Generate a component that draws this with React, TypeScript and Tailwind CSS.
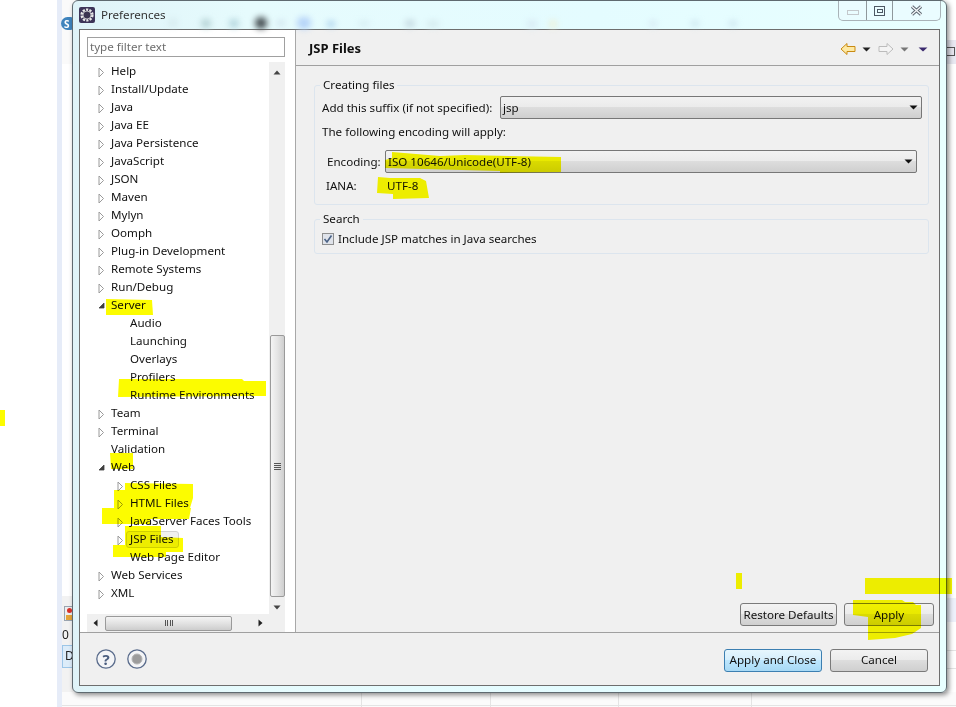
import React from "react";

const font = { fontFamily: '"Noto Sans", sans-serif' };

type Row = { t: string; lvl: 0 | 1; arrow?: "c" | "o" };
const rows: Row[] = [
  { t: "Help", lvl: 0, arrow: "c" },
  { t: "Install/Update", lvl: 0, arrow: "c" },
  { t: "Java", lvl: 0, arrow: "c" },
  { t: "Java EE", lvl: 0, arrow: "c" },
  { t: "Java Persistence", lvl: 0, arrow: "c" },
  { t: "JavaScript", lvl: 0, arrow: "c" },
  { t: "JSON", lvl: 0, arrow: "c" },
  { t: "Maven", lvl: 0, arrow: "c" },
  { t: "Mylyn", lvl: 0, arrow: "c" },
  { t: "Oomph", lvl: 0, arrow: "c" },
  { t: "Plug-in Development", lvl: 0, arrow: "c" },
  { t: "Remote Systems", lvl: 0, arrow: "c" },
  { t: "Run/Debug", lvl: 0, arrow: "c" },
  { t: "Server", lvl: 0, arrow: "o" },
  { t: "Audio", lvl: 1 },
  { t: "Launching", lvl: 1 },
  { t: "Overlays", lvl: 1 },
  { t: "Profilers", lvl: 1 },
  { t: "Runtime Environments", lvl: 1 },
  { t: "Team", lvl: 0, arrow: "c" },
  { t: "Terminal", lvl: 0, arrow: "c" },
  { t: "Validation", lvl: 0 },
  { t: "Web", lvl: 0, arrow: "o" },
  { t: "CSS Files", lvl: 1, arrow: "c" },
  { t: "HTML Files", lvl: 1, arrow: "c" },
  { t: "JavaServer Faces Tools", lvl: 1, arrow: "c" },
  { t: "JSP Files", lvl: 1, arrow: "c" },
  { t: "Web Page Editor", lvl: 1 },
  { t: "Web Services", lvl: 0, arrow: "c" },
  { t: "XML", lvl: 0, arrow: "c" },
];

function Arrow({ kind }: { kind?: "c" | "o" }) {
  if (kind === "c")
    return (
      <svg width="7" height="11" viewBox="0 0 7 11" className="mt-[2px] shrink-0">
        <path d="M1 1 L5.5 5.5 L1 10 Z" fill="#fff" stroke="#9a9a9a" />
      </svg>
    );
  if (kind === "o")
    return (
      <svg width="7" height="9" viewBox="0 0 7 9" className="mt-[1px] shrink-0">
        <path d="M6 2 L6 7 L1 7 Z" fill="#404040" stroke="#404040" strokeWidth="0.8" />
      </svg>
    );
  return <span className="w-[7px] shrink-0" />;
}

function TreeRow({ r }: { r: Row }) {
  const sel = r.t === "JSP Files";
  return (
    <div className={`flex h-[18px] items-center ${r.lvl === 0 ? "pl-[18px]" : "pl-[37px]"}`}>
      <Arrow kind={r.arrow} />
      {sel ? (
        <span className="ml-[2px] flex h-[17px] w-[53px] items-center rounded-[3px] border border-[#d2d2d2] bg-[#f0f0f0] pl-[3px] whitespace-nowrap">
          {r.t}
        </span>
      ) : (
        <span className="ml-[6px] leading-[16px] whitespace-nowrap">{r.t}</span>
      )}
    </div>
  );
}

function Caret({ color = "#111", w = 9 }: { color?: string; w?: number }) {
  return (
    <svg width={w} height="5" viewBox="0 0 9 5" preserveAspectRatio="none">
      <path d="M0.5 0.5 H8.5 L4.5 4.5 Z" fill={color} />
    </svg>
  );
}

function Combo({ text, className }: { text: string; className: string }) {
  return (
    <div
      className={`flex h-[23px] items-center justify-between rounded-[2px] border border-[#777] bg-[linear-gradient(#f2f2f2_0%,#ebebeb_48%,#dddddd_50%,#cfcfcf_100%)] pl-[2px] pr-[3px] ${className}`}
    >
      <span>{text}</span>
      <Caret />
    </div>
  );
}

function Btn({ text, className = "" }: { text: string; className?: string }) {
  return (
    <div
      className={`flex h-[23px] items-center justify-center rounded-[3px] border border-[#7a7a7a] bg-[linear-gradient(#f3f3f3_0%,#ebebeb_48%,#dddddd_50%,#cfcfcf_100%)] ${className}`}
    >
      {text}
    </div>
  );
}

function Group({ title, children, className }: { title: string; children: React.ReactNode; className: string }) {
  return (
    <div className={`relative rounded-[3px] border border-[#dce5ee] ${className}`}>
      <span className="absolute left-[5px] top-[-9px] bg-[#f0f0f0] px-[3px] leading-[16px]">{title}</span>
      {children}
    </div>
  );
}

function Highlights() {
  return (
    <svg width="956" height="707" viewBox="0 0 956 707" className="pointer-events-none absolute left-0 top-0 mix-blend-multiply">
      <g fill="#fcfc00">
        <path d="M0 410H5V426H0Z" />
        <path d="M736 573H742V589H736Z" />
        <path d="M865 578H952V594H865Z" />
        <path d="M853 600H902L905 602H913L916 605H921V628L912 634L895 638L868 640V617L853 615Z" />
        <path d="M392 152L440 156L465 155L561 157V172L500 173L500 171L385 168V160L392 158Z" />
        <path d="M378 177L390 178H420L426 181L429 198L393 199V194L377 193Z" />
        <path d="M106 299L152 300L153 315L106 315Z" />
        <path d="M119 379H242L244 381H266V396L118 397Z" />
        <path d="M110 453H133V469L111 469Z" />
        <path d="M125 483L193 484V498L190 508H114V490H125Z" />
        <path d="M102 508H191L189 519H150V524H102Z" />
        <path d="M125 526H161V537L183 538V552H166V557H113V545L125 545Z" />
      </g>
    </svg>
  );
}

function Backdrop() {
  return (
    <>
      <div className="absolute left-[57px] top-0 h-full w-[5px] bg-[#e6ecf8]" />
      <div className="absolute left-[62px] top-0 h-[64px] w-[12px] bg-[#fafafa]" />
      <div className="absolute left-[61px] top-[17px] flex h-[13px] w-[16px] items-center justify-start rounded-full bg-[#3f84bd] pl-[3px] text-[10px] font-bold leading-none text-white">
        S
      </div>
      <div className="absolute left-[62px] top-[596px] h-[111px] w-[12px] bg-[#f2f2f2]" />
      <div className="absolute left-[64px] top-[606px] flex h-[15px] w-[10px] flex-col items-center justify-between border border-[#9aa4b0] bg-[#eeeeee]">
        <div className="mt-[1px] h-[5px] w-[5px] rounded-full bg-[#d8322a]" />
        <div className="h-[5px] w-[6px] bg-[#e4a43a]" />
      </div>
      <div className="absolute left-[62px] top-[628px] text-[12px] leading-[14px] text-[#222]">0</div>
      <div className="absolute left-[62px] top-[645px] h-[23px] w-[12px] border border-[#9cc6e8] bg-[#dcecf9] pl-[2px] text-[12px] leading-[20px] text-[#222]">
        D
      </div>
      <div className="absolute left-[62px] top-[692px] h-[15px] w-[894px] bg-[#fbfbfb]" />
      <div className="absolute left-[62px] top-[705px] h-px w-[894px] bg-[#e4e4e4]" />
      <div className="absolute left-[361px] top-[692px] h-[15px] w-px bg-[#e4e4e4]" />
      <div className="absolute left-[490px] top-[692px] h-[15px] w-px bg-[#e4e4e4]" />
      <div className="absolute left-[618px] top-[692px] h-[15px] w-px bg-[#e4e4e4]" />
      <div className="absolute left-[751px] top-[692px] h-[15px] w-px bg-[#e4e4e4]" />
      <div className="absolute left-[947px] top-[40px] h-[24px] w-[9px] bg-[#e9e9f2]" />
      <div className="absolute left-[946px] top-[47px] h-[9px] w-[9px] border border-[#555]" />
      <div className="absolute left-[947px] top-[598px] h-[24px] w-[9px] bg-[#eef1fb]" />
      <div className="absolute left-[947px] top-[650px] h-px w-[9px] bg-[#e4e4e4]" />
      <div className="absolute left-[947px] top-[668px] h-px w-[9px] bg-[#e4e4e4]" />
    </>
  );
}

const blurs: { l: string; t: string; s: string; c: string }[] = [
  { l: "left-[90px]", t: "top-[18px]", s: "h-[8px] w-[8px]", c: "bg-[#d4e8ec]" },
  { l: "left-[122px]", t: "top-[18px]", s: "h-[9px] w-[10px]", c: "bg-[#b4d2d4]" },
  { l: "left-[150px]", t: "top-[18px]", s: "h-[9px] w-[10px]", c: "bg-[#b4d6de]" },
  { l: "left-[176px]", t: "top-[16px]", s: "h-[12px] w-[12px]", c: "bg-[#40484c]" },
  { l: "left-[198px]", t: "top-[20px]", s: "h-[4px] w-[8px]", c: "bg-[#c8dae6]" },
  { l: "left-[218px]", t: "top-[16px]", s: "h-[12px] w-[14px]", c: "bg-[#b4d2f8]" },
  { l: "left-[248px]", t: "top-[20px]", s: "h-[6px] w-[8px]", c: "bg-[#a8cfec]" },
  { l: "left-[280px]", t: "top-[20px]", s: "h-[5px] w-[10px]", c: "bg-[#d4eaf0]" },
  { l: "left-[326px]", t: "top-[19px]", s: "h-[7px] w-[10px]", c: "bg-[#c4d8e0]" },
  { l: "left-[348px]", t: "top-[20px]", s: "h-[6px] w-[12px]", c: "bg-[#d4e8ec]" },
  { l: "left-[448px]", t: "top-[19px]", s: "h-[8px] w-[10px]", c: "bg-[#d8eaf4]" },
  { l: "left-[470px]", t: "top-[19px]", s: "h-[8px] w-[8px]", c: "bg-[#ecf1d8]" },
  { l: "left-[570px]", t: "top-[19px]", s: "h-[7px] w-[8px]", c: "bg-[#d8eaf4]" },
  { l: "left-[612px]", t: "top-[20px]", s: "h-[5px] w-[8px]", c: "bg-[#c8e0ea]" },
  { l: "left-[650px]", t: "top-[20px]", s: "h-[5px] w-[8px]", c: "bg-[#c8e0ea]" },
];

export default function App() {
  return (
    <div className="relative h-[707px] w-[956px] overflow-hidden bg-white text-[11.6px] text-[#111]" style={font}>
      <Backdrop />
      <div className="absolute left-[72px] top-0 flex h-[693px] w-[875px] flex-col rounded-[6px] border border-[#5f6a70] bg-[linear-gradient(90deg,#dff3f8_0%,#e6fbfd_20%,#e4fcff_60%,#e8ffff_100%)] px-[6px] pb-[6px] shadow-[2px_2px_5px_rgba(0,0,0,0.45)]">
        <div className="relative flex h-[28px] shrink-0 items-center gap-[5px]">
          {blurs.map((b) => (
            <div key={b.l} className={`absolute rounded-full blur-[3px] ${b.l} ${b.t} ${b.s} ${b.c}`} />
          ))}
          <div className="relative flex h-[16px] w-[16px] items-center justify-center rounded-[2px] bg-[#3d3458]">
            <svg width="16" height="16" viewBox="0 0 16 16">
              <circle cx="8" cy="8" r="5.4" fill="none" stroke="#e8e8e8" strokeWidth="2.4" strokeDasharray="2.2 1.2" />
              <circle cx="8" cy="8" r="4" fill="#3a3350" stroke="#d8d8d8" strokeWidth="0.8" />
            </svg>
          </div>
          <span className="relative ml-[1px] text-[#333]">Preferences</span>
          <div className="absolute right-[-1px] top-0 flex h-[20px] w-[103px] rounded-b-[5px] border border-t-0 border-[#a9b3b8] bg-[#eafcff]">
            <div className="flex w-[28px] items-center justify-center border-r border-[#8f989c]">
              <div className="mt-[4px] h-[5px] w-[12px] border border-[#c4c8cc]" />
            </div>
            <div className="flex w-[26px] items-center justify-center border-r border-[#8f989c]">
              <div className="flex h-[10px] w-[11px] items-center justify-center border border-[#4d5863]">
                <div className="h-[4px] w-[6px] border border-[#4d5863]" />
              </div>
            </div>
            <div className="flex flex-1 items-center justify-center">
              <svg width="13" height="11" viewBox="0 0 13 11">
                <path d="M2 1.5 L11 9.5 M11 1.5 L2 9.5" stroke="#59636d" strokeWidth="3.2" />
                <path d="M2 1.5 L11 9.5 M11 1.5 L2 9.5" stroke="#f2f6f8" strokeWidth="1.4" />
              </svg>
            </div>
          </div>
        </div>

        <div className="flex min-h-0 flex-1 flex-col border border-[#6e6e6e] bg-[#f0f0f0]">
          <div className="flex min-h-0 flex-1">
            <div className="flex w-[215px] shrink-0 flex-col bg-white">
              <div className="px-[7px] pt-[7px]">
                <div className="flex h-[20px] w-[198px] items-center border border-[#a0a0a0] pl-[2px] text-[#6d6d6d]">
                  type filter text
                </div>
              </div>
              <div className="relative mt-[5px] min-h-0 flex-1">
                <div className="w-[189px]">
                  {rows.map((r) => (
                    <TreeRow key={r.t} r={r} />
                  ))}
                </div>
                <div className="absolute left-[189px] top-0 flex h-[552px] w-[16px] flex-col items-center bg-[#f0f0f0]">
                  <svg width="8" height="5" viewBox="0 0 8 5" className="mt-[8px] shrink-0">
                    <path d="M0.5 4.5 H7.5 L4 0.5 Z" fill="#444" />
                  </svg>
                  <div className="mt-[260px] flex h-[262px] w-[15px] shrink-0 items-center justify-center rounded-[2px] border border-[#9a9a9a] bg-[linear-gradient(90deg,#f4f4f4,#e4e4e4_50%,#cfcfcf)]">
                    <div className="h-[7px] w-[7px] border-y-[3px] border-double border-[#555]" />
                  </div>
                  <svg width="8" height="5" viewBox="0 0 8 5" className="mt-[8px] shrink-0">
                    <path d="M0.5 0.5 H7.5 L4 4.5 Z" fill="#444" />
                  </svg>
                </div>
                <div className="absolute left-[7px] top-[552px] flex h-[18px] w-[198px] items-center bg-[#f0f0f0]">
                  <svg width="5" height="8" viewBox="0 0 5 8" className="ml-[6px] shrink-0">
                    <path d="M4.5 0.5 V7.5 L0.5 4 Z" fill="#222" />
                  </svg>
                  <div className="ml-[7px] flex h-[15px] w-[127px] shrink-0 items-center justify-center rounded-[2px] border border-[#9a9a9a] bg-[linear-gradient(#f4f4f4,#e2e2e2_50%,#cdcdcd)]">
                    <div className="h-[6px] w-[8px] border-x-[3px] border-double border-[#555]" />
                  </div>
                  <svg width="5" height="8" viewBox="0 0 5 8" className="ml-[26px] shrink-0">
                    <path d="M0.5 0.5 V7.5 L4.5 4 Z" fill="#222" />
                  </svg>
                </div>
              </div>
            </div>
            <div className="flex min-w-0 flex-1 flex-col border-l border-[#a8a8a8]">
              <div className="flex h-[36px] shrink-0 items-center justify-between border-b border-[#a0a0a0] pl-[13px] pr-[11px] pt-[3px]">
                <span className="text-[13px] font-bold">JSP Files</span>
                <div className="flex items-center">
                  <svg width="16" height="14" viewBox="0 0 16 14">
                    <path d="M1 7 L7 1.5 V4.5 H15 V9.5 H7 V12.5 Z" fill="#fde9a4" stroke="#c98a12" />
                  </svg>
                  <span className="ml-[6px] flex"><Caret color="#222" /></span>
                  <svg width="16" height="14" viewBox="0 0 16 14" className="ml-[7px]">
                    <path d="M15 7 L9 1.5 V4.5 H1 V9.5 H9 V12.5 Z" fill="#f4f4f4" stroke="#bcbcbc" />
                  </svg>
                  <span className="ml-[6px] flex"><Caret color="#777" /></span>
                  <span className="ml-[9px] flex"><Caret color="#3b2a6e" w={10} /></span>
                </div>
              </div>
              <div className="flex min-h-0 flex-1 flex-col pl-[18px] pr-[5px] pt-[19px]">
                <Group title="Creating files" className="h-[120px] w-[615px] shrink-0 pl-[7px] pt-[8px]">
                  <div className="flex h-[27px] items-center">
                    <span className="w-[178px]">Add this suffix (if not specified):</span>
                    <Combo text="jsp" className="w-[422px]" />
                  </div>
                  <div className="mt-[1px] flex h-[20px] items-center">The following encoding will apply:</div>
                  <div className="mt-[8px] flex h-[23px] items-center pl-[5px]">
                    <span className="w-[58px]">Encoding:</span>
                    <Combo text="ISO 10646/Unicode(UTF-8)" className="w-[532px]" />
                  </div>
                  <div className="mt-[1px] flex h-[23px] items-center pl-[4px]">
                    <span className="w-[61px]">IANA:</span>
                    <span>UTF-8</span>
                  </div>
                </Group>
                <Group title="Search" className="mt-[14px] h-[35px] w-[615px] shrink-0 pl-[7px] pt-[10px]">
                  <div className="flex items-center gap-[4px]">
                    <div className="flex h-[12px] w-[12px] items-center justify-center border border-[#8e8f8f] bg-[#dfe3ea]">
                      <svg width="10" height="10" viewBox="0 0 10 10">
                        <path d="M1.5 5 L4 8 L8.5 1.5" fill="none" stroke="#4a6285" strokeWidth="1.6" />
                      </svg>
                    </div>
                    <span>Include JSP matches in Java searches</span>
                  </div>
                </Group>
                <div className="mt-auto flex justify-end gap-[7px] pb-[6px]">
                  <Btn text="Restore Defaults" className="w-[97px]" />
                  <Btn text="Apply" className="w-[90px]" />
                </div>
              </div>
            </div>
          </div>
          <div className="flex h-[53px] shrink-0 items-center justify-between border-t border-[#a0a0a0] pl-[16px] pr-[11px]">
            <div className="flex items-center gap-[11px]">
              <svg width="20" height="20" viewBox="0 0 20 20">
                <circle cx="10" cy="10" r="9.2" fill="#f4f5f7" stroke="#5a6c8c" strokeWidth="1.3" />
                <text x="10" y="15.5" textAnchor="middle" fontSize="15" fontWeight="700" fill="#4c5f80">?</text>
              </svg>
              <svg width="20" height="20" viewBox="0 0 20 20">
                <circle cx="10" cy="10" r="9.2" fill="#f4f5f7" stroke="#5a6c8c" strokeWidth="1.3" />
                <circle cx="10" cy="10" r="5" fill="#9c9c9c" stroke="#b5b5b5" />
              </svg>
            </div>
            <div className="flex gap-[8px] pt-[2px]">
              <div className="flex h-[23px] w-[98px] items-center justify-center rounded-[3px] border border-[#3c7fb1] bg-[linear-gradient(#e6f6fd_0%,#d5eefc_48%,#bde6fd_50%,#a7d9f5_100%)]">
                Apply and Close
              </div>
              <Btn text="Cancel" className="w-[98px]" />
            </div>
          </div>
        </div>
      </div>
      <Highlights />
    </div>
  );
}
